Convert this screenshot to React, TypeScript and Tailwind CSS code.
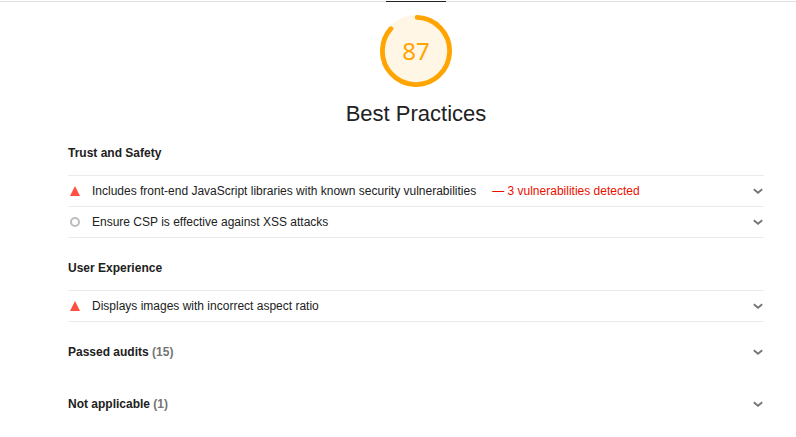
type Audit = { title: string; status: "fail" | "info"; detail?: string };

const trustAudits: Audit[] = [
  {
    title: "Includes front-end JavaScript libraries with known security vulnerabilities",
    status: "fail",
    detail: "3 vulnerabilities detected",
  },
  { title: "Ensure CSP is effective against XSS attacks", status: "info" },
];

const experienceAudits: Audit[] = [
  { title: "Displays images with incorrect aspect ratio", status: "fail" },
];

function Chevron() {
  return (
    <svg className="h-3 w-3 shrink-0" viewBox="0 0 12 12" fill="none" aria-hidden="true">
      <path d="M1.8 4.2 6 7.8l4.2-3.6" stroke="#757575" strokeWidth="1.8" />
    </svg>
  );
}

function StatusIcon({ status }: { status: Audit["status"] }) {
  return (
    <svg className="mr-3 ml-0.5 h-2.5 w-2.5 shrink-0" viewBox="0 0 10 10" aria-hidden="true">
      {status === "fail" ? (
        <path d="M5 0l5 10H0z" fill="#ff4e42" />
      ) : (
        <circle cx="5" cy="5" r="4" fill="none" stroke="#bdbdbd" strokeWidth="2" />
      )}
    </svg>
  );
}

function Gauge({ score }: { score: number }) {
  const radius = 56;
  const length = 2 * Math.PI * radius;
  const arc = (score / 100) * length - 4;
  return (
    <div className="grid h-18 w-18 place-items-center">
      <svg className="col-start-1 row-start-1 h-18 w-18" viewBox="0 0 120 120" aria-hidden="true">
        <circle cx="60" cy="60" r="60" fill="#fff6e5" />
        <circle
          cx="60"
          cy="60"
          r={radius}
          fill="none"
          stroke="#ffa400"
          strokeWidth="8"
          strokeLinecap="round"
          strokeDasharray={`${arc} ${length}`}
          transform="rotate(-88 60 60)"
        />
      </svg>
      <span className="col-start-1 row-start-1 font-['Noto_Sans',sans-serif] text-2xl leading-6 text-[#ffa400]">
        {score}
      </span>
    </div>
  );
}

function AuditGroup({ title, audits }: { title: string; audits: Audit[] }) {
  return (
    <section className="mb-5">
      <h2 className="mb-3 leading-5 font-bold">{title}</h2>
      <ul className="border-t border-[#ebebeb]">
        {audits.map((audit) => (
          <li key={audit.title} className="border-b border-[#ebebeb]">
            <button type="button" className="flex h-[30px] w-full items-center text-left">
              <StatusIcon status={audit.status} />
              <span className="flex-1">
                {audit.title}
                {audit.detail && <span className="ml-4 text-[#eb0f00]">— {audit.detail}</span>}
              </span>
              <Chevron />
            </button>
          </li>
        ))}
      </ul>
    </section>
  );
}

function Clump({ title, count }: { title: string; count: number }) {
  return (
    <button type="button" className="flex w-full items-center justify-between text-left leading-5 font-bold">
      <span>
        {title} <span className="text-[#757575]">({count})</span>
      </span>
      <Chevron />
    </button>
  );
}

export default function App() {
  return (
    <main className="bg-white pt-px font-['Liberation_Sans',Arial,sans-serif] text-xs text-[#212121]">
      <div className="h-px bg-[#e0e0e0] pr-8 pl-[68px]">
        <div className="mx-auto h-px w-15 bg-[#212121]" />
      </div>
      <div className="pr-8 pl-[68px]">
        <header className="flex flex-col items-center pt-[13px] pb-[15px]">
          <Gauge score={87} />
          <h1 className="mt-[13px] text-[22px] leading-7">Best Practices</h1>
        </header>
        <AuditGroup title="Trust and Safety" audits={trustAudits} />
        <AuditGroup title="User Experience" audits={experienceAudits} />
        <div className="flex flex-col gap-8">
          <Clump title="Passed audits" count={15} />
          <Clump title="Not applicable" count={1} />
        </div>
      </div>
    </main>
  );
}
